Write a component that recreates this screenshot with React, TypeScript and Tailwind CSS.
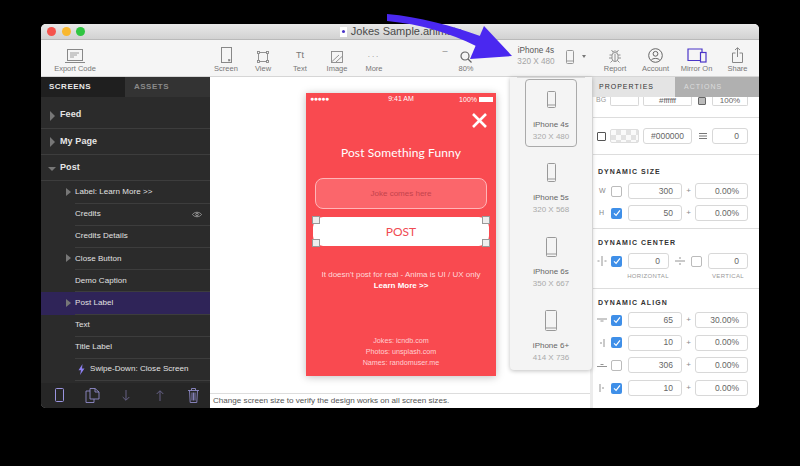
import React from "react";

const Tool = ({ w, label, children }: { w: string; label: string; children: React.ReactNode }) => (
  <div className={`${w} flex h-full shrink-0 flex-col items-center`}>
    <div className="flex h-[23px] items-end justify-center pt-[3px] text-[#777]">{children}</div>
    <div className="mt-[1px] whitespace-nowrap text-[7.5px] leading-[10px] text-[#777]">{label}</div>
  </div>
);

const Phone = ({ h = 17, w = 9, c = "#999" }: { h?: number; w?: number; c?: string }) => (
  <svg width={w + 2} height={h + 2} viewBox={`0 0 ${w + 2} ${h + 2}`} fill="none" stroke={c}>
    <rect x="1.5" y="1.5" width={w - 1} height={h - 1} rx="1" strokeWidth="1" />
    <path d={`M1.5 ${h - 2}H${w + 0.5}`} strokeWidth="1" />
  </svg>
);

const Row = ({ label, open }: { label: string; open?: boolean }) => (
  <div className="relative flex h-[26.3px] items-center border-b border-[#3d3d3d] pl-[19px] text-[9px] font-bold tracking-[0.1px] text-[#e6e6e6]">
    <span
      className={
        open
          ? "absolute left-[7px] top-[12px] h-0 w-0 border-x-[4px] border-t-[4px] border-x-transparent border-t-[#777]"
          : "absolute left-[9px] top-[8px] h-0 w-0 border-y-[5px] border-l-[5px] border-y-transparent border-l-[#777]"
      }
    />
    {label}
  </div>
);

const Sub = ({
  label,
  arrow,
  selected,
  eye,
  bolt,
}: {
  label: string;
  arrow?: boolean;
  selected?: boolean;
  eye?: boolean;
  bolt?: boolean;
}) => (
  <div className={`relative h-[22.2px] pl-[34px] ${selected ? "bg-[#2f2458]" : ""}`}>
    {arrow && (
      <span className="absolute left-[25px] top-[6.5px] h-0 w-0 border-y-[4.5px] border-l-[5px] border-y-transparent border-l-[#777]" />
    )}
    <div className="flex h-full items-center justify-between border-b border-[#3d3d3d] pr-[8px] text-[8px] tracking-[0.05px] text-[#e2e2e2]">
      <span className="flex items-center">
        {bolt && (
          <svg width="7" height="11" viewBox="0 0 7 11" className="ml-[3px] mr-[5px]">
            <path d="M4.5 0L0.5 6.2H3L2 11L6.5 4.4H4Z" fill="#8c7ff0" />
          </svg>
        )}
        {label}
      </span>
      {eye && (
        <svg width="10" height="7" viewBox="0 0 10 7" fill="none" stroke="#aaa" strokeWidth="0.8">
          <path d="M0.5 3.5C2.5 0.5 7.5 0.5 9.5 3.5C7.5 6.5 2.5 6.5 0.5 3.5Z" />
          <circle cx="5" cy="3.5" r="1.3" />
        </svg>
      )}
    </div>
  </div>
);

const Field = ({ w, v, center }: { w: string; v: string; center?: boolean }) => (
  <div
    className={`${w} flex h-[16px] shrink-0 items-center ${center ? "justify-center" : "justify-end pr-[8px]"} rounded-[3px] border border-[#d8d8d8] bg-white text-[8.5px] text-[#666]`}
  >
    {v}
  </div>
);

const Check = ({ on }: { on?: boolean }) =>
  on ? (
    <div className="flex h-[11px] w-[11px] shrink-0 items-center justify-center rounded-[2px] bg-[#3f8fe8]">
      <svg width="8" height="8" viewBox="0 0 8 8" fill="none" stroke="#fff" strokeWidth="1.2">
        <path d="M1 4.3L3.1 6.4L7 1.4" />
      </svg>
    </div>
  ) : (
    <div className="h-[11px] w-[11px] shrink-0 rounded-[2px] border border-[#bbb] bg-white" />
  );

const SectionTitle = ({ children }: { children: string }) => (
  <div className="text-[7px] font-bold leading-[9px] tracking-[1.05px] text-[#333]">{children}</div>
);

const AlignIcon = ({ d }: { d: string }) => (
  <svg width="10" height="10" viewBox="0 0 10 10" fill="none" stroke="#888" strokeWidth="0.9" className="shrink-0">
    <path d={d} />
  </svg>
);

const AlignRow = ({ d, on, a, b }: { d: string; on?: boolean; a: string; b: string }) => (
  <div className="flex h-[16px] items-center">
    <div className="-ml-[1px] flex w-[14px] justify-start">
      <AlignIcon d={d} />
    </div>
    <Check on={on} />
    <div className="w-[6px]" />
    <Field w="w-[54px]" v={a} />
    <div className="w-[13px] text-center text-[8px] text-[#888]">+</div>
    <Field w="w-[53px]" v={b} />
  </div>
);

const SizeRow = ({ l, on, a }: { l: string; on?: boolean; a: string }) => (
  <div className="flex h-[16px] items-center">
    <div className="w-[13px] pl-[1px] text-[7px] text-[#888]">{l}</div>
    <Check on={on} />
    <div className="w-[6px]" />
    <Field w="w-[54px]" v={a} />
    <div className="w-[13px] text-center text-[8px] text-[#888]">+</div>
    <Field w="w-[53px]" v="0.00%" />
  </div>
);

const Device = ({ h, w, name, size, selected }: { h: number; w: number; name: string; size: string; selected?: boolean }) => (
  <div className={`flex h-[68px] w-[52px] flex-col items-center rounded-[4px] ${selected ? "border border-[#aaa]" : ""}`}>
    <div className={`flex h-[38px] items-center justify-center ${selected ? "" : "pt-[1px]"}`}>
      <Phone h={h} w={w} />
    </div>
    <div className="mt-[1px] whitespace-nowrap text-[8px] leading-[12px] text-[#666]">{name}</div>
    <div className="whitespace-nowrap text-[8px] leading-[12px] text-[#aaa]">{size}</div>
  </div>
);

const Handle = ({ cls }: { cls: string }) => <div className={`absolute h-[8px] w-[8px] border border-[#999] bg-[#eee] ${cls}`} />;

export default function App() {
  return (
    <div className="relative h-[466px] w-[800px] overflow-hidden bg-black pl-[41px] pt-[24px] font-['Liberation_Sans']">
      {/* window */}
      <div className="flex h-[384px] w-[718px] flex-col overflow-hidden rounded-[5px] bg-white">
        {/* title bar */}
        <div className="relative flex h-[16px] shrink-0 items-center justify-center border-b border-[#b9b9b9] bg-gradient-to-b from-[#e8e8e8] to-[#d2d2d2]">
          <div className="absolute left-[6px] top-[3px] flex gap-[5.5px]">
            <span className="h-[9px] w-[9px] rounded-full bg-[#f5544d]" />
            <span className="h-[9px] w-[9px] rounded-full bg-[#f9b82f]" />
            <span className="h-[9px] w-[9px] rounded-full bg-[#2fc541]" />
          </div>
          <div className="ml-[2px] flex items-center gap-[4px] text-[11px] text-[#4a4a4a]">
            <span className="flex h-[10px] w-[7px] items-center justify-center bg-white">
              <span className="h-[3px] w-[3px] rounded-full bg-[#4a35c8]" />
            </span>
            Jokes Sample.animate
          </div>
        </div>
        {/* toolbar */}
        <div className="flex h-[37px] shrink-0 border-b border-[#d6d6d6] bg-[#f5f5f5]">
          <Tool w="w-[68px]" label="Export Code">
            <svg width="20" height="14" viewBox="0 0 20 14" fill="none" stroke="#888">
              <rect x="2.5" y="0.5" width="15" height="11" />
              <path d="M0 13.5H20" />
              <path d="M5 4H14M5 6H12M5 8H9" strokeWidth="0.8" />
            </svg>
          </Tool>
          <div className="w-[98.5px] shrink-0" />
          <Tool w="w-[37px]" label="Screen">
            <svg width="11" height="16" viewBox="0 0 11 16" fill="none" stroke="#888">
              <rect x="0.5" y="0.5" width="10" height="15" />
              <rect x="7.5" y="12.5" width="1.5" height="1.5" fill="#888" strokeWidth="0.5" />
            </svg>
          </Tool>
          <Tool w="w-[37px]" label="View">
            <svg width="12" height="12" viewBox="0 0 12 12" fill="none" stroke="#888" strokeWidth="0.9">
              <rect x="1.5" y="1.5" width="9" height="9" />
              <rect x="0.5" y="0.5" width="2" height="2" fill="#f5f5f5" />
              <rect x="9.5" y="0.5" width="2" height="2" fill="#f5f5f5" />
              <rect x="0.5" y="9.5" width="2" height="2" fill="#f5f5f5" />
              <rect x="9.5" y="9.5" width="2" height="2" fill="#f5f5f5" />
            </svg>
          </Tool>
          <Tool w="w-[37px]" label="Text">
            <span className="pb-[2px] text-[9px] leading-[12px] text-[#777]">Tt</span>
          </Tool>
          <Tool w="w-[37px]" label="Image">
            <svg width="12" height="12" viewBox="0 0 12 12" fill="none" stroke="#888" strokeWidth="0.9">
              <rect x="0.5" y="0.5" width="11" height="11" />
              <path d="M1 10.5L8 4M5 11L11 5.5" />
            </svg>
          </Tool>
          <Tool w="w-[37px]" label="More">
            <span className="pb-[5px] text-[8px] leading-[6px] tracking-[2px] text-[#888]">...</span>
          </Tool>
          <div className="w-[42.5px] shrink-0" />
          <div className="flex w-[20px] shrink-0 items-start justify-center pt-[6px] text-[9px] leading-[10px] text-[#888]">–</div>
          <Tool w="w-[22px]" label="80%">
            <svg width="12" height="12" viewBox="0 0 12 12" fill="none" stroke="#666" strokeWidth="1.2">
              <circle cx="5" cy="5" r="4" />
              <path d="M8 8L11.5 11.5" />
            </svg>
          </Tool>
          <div className="w-[39px] shrink-0" />
          <div className="flex w-[40px] shrink-0 flex-col items-center whitespace-nowrap pt-[4.5px] text-[8.2px] leading-[11.5px]">
            <span className="text-[#555]">iPhone 4s</span>
            <span className="text-[#a5a5a5]">320 X 480</span>
          </div>
          <div className="flex w-[19px] shrink-0 items-center justify-end pb-[3px]">
            <Phone h={14} w={8} />
          </div>
          <div className="flex w-[20px] shrink-0 items-center pb-[3px] pl-[7px]">
            <span className="h-0 w-0 border-x-[2.5px] border-t-[3px] border-x-transparent border-t-[#777]" />
          </div>
          <Tool w="w-[40px]" label="Report">
            <svg width="14" height="14" viewBox="0 0 14 14" fill="none" stroke="#888" strokeWidth="0.9">
              <rect x="4" y="3.5" width="6" height="9" rx="3" />
              <path d="M5 3.5C5 1.5 9 1.5 9 3.5M4 6H1.5M10 6H12.5M4 9H1M10 9H13M4.5 11.5L2.5 13.5M9.5 11.5L11.5 13.5M7 5V12.5M3.5 1L5 3M10.5 1L9 3" />
            </svg>
          </Tool>
          <Tool w="w-[41px]" label="Account">
            <svg width="15" height="15" viewBox="0 0 15 15" fill="none" stroke="#666" strokeWidth="1">
              <circle cx="7.5" cy="7.5" r="6.8" />
              <circle cx="7.5" cy="5.8" r="2.4" />
              <path d="M3.2 12.4C4 9.8 11 9.8 11.8 12.4" />
            </svg>
          </Tool>
          <Tool w="w-[41px]" label="Mirror On">
            <svg width="20" height="15" viewBox="0 0 20 15" fill="none" stroke="#4a35c8" strokeWidth="1.2">
              <path d="M13 12.5H1V1H15V4" />
              <rect x="13.5" y="4.5" width="5.5" height="9.5" fill="#f5f5f5" />
            </svg>
          </Tool>
          <Tool w="w-[41px]" label="Share">
            <svg width="11" height="16" viewBox="0 0 11 16" fill="none" stroke="#888">
              <path d="M3.5 6H0.5V15.5H10.5V6H7.5M5.5 10V1M3 3L5.5 0.7L8 3" />
            </svg>
          </Tool>
        </div>
        {/* body */}
        <div className="flex min-h-0 flex-1">
          {/* sidebar */}
          <div className="flex w-[169px] shrink-0 flex-col bg-[#2b2b2b]">
            <div className="flex h-[20px] shrink-0 text-[8px] font-bold tracking-[0.5px]">
              <div className="flex w-[84px] items-center bg-[#1f1f1f] pl-[8px] text-[#e8e8e8]">SCREENS</div>
              <div className="flex w-[85px] items-center bg-[#333] pl-[9px] text-[#8a8a8a]">ASSETS</div>
            </div>
            <div className="h-[5.5px] shrink-0" />
            <Row label="Feed" />
            <Row label="My Page" />
            <Row label="Post" open />
            <Sub label="Label: Learn More >>" arrow />
            <Sub label="Credits" eye />
            <Sub label="Credits Details" />
            <Sub label="Close Button" arrow />
            <Sub label="Demo Caption" />
            <Sub label="Post Label" arrow selected />
            <Sub label="Text" />
            <Sub label="Title Label" />
            <Sub label="Swipe-Down: Close Screen" bolt />
            <div className="mt-auto flex h-[25.5px] shrink-0 items-center bg-[#262626]">
              <div className="flex w-[34px] justify-center pl-[2px]">
                <svg width="9" height="14" viewBox="0 0 9 14" fill="none" stroke="#9a94e0" strokeWidth="1">
                  <rect x="0.5" y="0.5" width="8" height="13" rx="1" />
                </svg>
              </div>
              <div className="flex w-[34px] justify-center">
                <svg width="15" height="15" viewBox="0 0 15 15" fill="none" stroke="#8f8ac8" strokeWidth="0.9">
                  <path d="M5 3H1V14.5H9V11M5 0.5H10L14 4V11H5ZM10 0.5V4H14" />
                </svg>
              </div>
              <div className="flex w-[34px] justify-center">
                <svg width="8" height="11" viewBox="0 0 8 11" fill="none" stroke="#6d6890" strokeWidth="0.9">
                  <path d="M4 0V10M0.7 7L4 10.3L7.3 7" />
                </svg>
              </div>
              <div className="flex w-[34px] justify-center">
                <svg width="8" height="11" viewBox="0 0 8 11" fill="none" stroke="#6d6890" strokeWidth="0.9">
                  <path d="M4 11V1M0.7 4L4 0.7L7.3 4" />
                </svg>
              </div>
              <div className="flex w-[33px] justify-center">
                <svg width="11" height="15" viewBox="0 0 11 15" fill="none" stroke="#8f8ac8" strokeWidth="0.9">
                  <path d="M0 2.5H11M3.5 2.5V0.5H7.5V2.5M1.5 2.5L2.2 14.5H8.8L9.5 2.5M4 4.5V12.5M5.5 4.5V12.5M7 4.5V12.5" />
                </svg>
              </div>
            </div>
          </div>
          {/* canvas */}
          <div className="flex w-[380px] shrink-0 flex-col bg-white">
            <div className="flex-1 pl-[96px] pt-[16px]">
              <div className="flex h-[283px] w-[190px] flex-col items-center bg-[#f94a50] text-white shadow-[0_1px_8px_rgba(0,0,0,0.25)]">
                <div className="relative flex h-[13px] w-full shrink-0 items-center justify-center text-[7px]">
                  <span className="absolute left-[4px] top-[2px] text-[7px] leading-[8px] tracking-[-0.5px]">●●●●●</span>
                  9:41 AM
                  <span className="absolute right-[3px] top-[3px] flex items-center gap-[2px] leading-[7px]">
                    100%
                    <span className="h-[5px] w-[14px] bg-white" />
                  </span>
                </div>
                <div className="flex w-full justify-end pr-[9px] pt-[7px]">
                  <svg width="15" height="15" viewBox="0 0 15 15" stroke="#fff" strokeWidth="2.6">
                    <path d="M1 1L14 14M14 1L1 14" />
                  </svg>
                </div>
                <div className="mt-[16px] font-['Lato'] text-[12px] leading-[18px] tracking-[0.1px]">Post Something Funny</div>
                <div className="mt-[16px] flex h-[31px] w-[172px] items-center justify-center rounded-[8px] border border-[#ffb5b8] bg-[#fb666b] text-[8px] text-[#c4434b]">
                  Joke comes here
                </div>
                <div className="relative mt-[8px] flex h-[29px] w-[176px] items-center justify-center rounded-[10px] bg-white font-['Lato'] text-[12px] text-[#f04a52]">
                  POST
                  <Handle cls="-left-[1px] -top-[1px]" />
                  <Handle cls="-right-[1px] -top-[1px]" />
                  <Handle cls="-bottom-[1px] -left-[1px]" />
                  <Handle cls="-bottom-[1px] -right-[1px]" />
                </div>
                <div className="mt-[23px] text-center text-[8px] leading-[11px] text-[#ffd9da]">
                  It doesn't post for real - Anima is UI / UX only
                  <div className="font-bold text-white">Learn More &gt;&gt;</div>
                </div>
                <div className="mt-[44px] text-center text-[7.2px] leading-[11px] text-[#ffd0d2]">
                  <div>Jokes: icndb.com</div>
                  <div>Photos: unsplash.com</div>
                  <div>Names: randomuser.me</div>
                </div>
              </div>
            </div>
            <div className="flex h-[15px] shrink-0 items-center border-t border-[#ddd] pl-[3px] text-[8.1px] text-[#555]">
              Change screen size to verify the design works on all screen sizes.
            </div>
          </div>
          {/* right panel */}
          <div className="flex w-[169px] shrink-0 flex-col border-l-[3px] border-[#ececec] bg-white">
            <div className="-ml-[2px] flex h-[20px] shrink-0 text-[7px] tracking-[1px]">
              <div className="flex w-[84px] items-center bg-[#e4e4e4] pl-[8px] text-[#333]">PROPERTIES</div>
              <div className="flex flex-1 items-center bg-[#b0b0b0] pl-[9px] text-[#dcdcdc]">ACTIONS</div>
            </div>
            {/* BG row, cut by tabs */}
            <div className="flex h-[21px] shrink-0 items-start border-b border-[#ddd] pl-[3px]">
              <div className="w-[14px] text-[7px] leading-[6px] text-[#999]">BG</div>
              <div className="h-[9px] w-[29px] rounded-b-[2px] border border-t-0 border-[#d8d8d8]" />
              <div className="w-[4px]" />
              <div className="flex h-[9px] w-[49px] items-start justify-center rounded-b-[2px] border border-t-0 border-[#d8d8d8] text-[8px] leading-[7px] text-[#666]">
                #ffffff
              </div>
              <div className="w-[6px]" />
              <div className="h-[8px] w-[8px] rounded-[1px] border border-[#666] bg-[#bbb]" />
              <div className="w-[6px]" />
              <div className="flex h-[9px] w-[36px] items-start justify-center rounded-b-[2px] border border-t-0 border-[#d8d8d8] text-[8px] leading-[7px] text-[#666]">
                100%
              </div>
            </div>
            <div className="flex h-[37px] shrink-0 items-center border-b border-[#ddd] pl-[4px]">
              <div className="w-[13px]">
                <div className="h-[9px] w-[9px] rounded-[1px] border border-[#555]" />
              </div>
              <div
                className="h-[14px] w-[29px] rounded-[2px] border border-[#ddd]"
                style={{
                  backgroundImage: "repeating-conic-gradient(#e2e2e2 0% 25%, #fafafa 0% 50%)",
                  backgroundSize: "10px 10px",
                }}
              />
              <div className="w-[4px]" />
              <Field w="w-[49px]" v="#000000" center />
              <div className="w-[7px]" />
              <svg width="8" height="6" viewBox="0 0 8 6" stroke="#777" className="shrink-0">
                <path d="M0 0.5H8M0 3H8M0 5.5H8" />
              </svg>
              <div className="w-[5px]" />
              <Field w="w-[36px]" v="0" />
            </div>
            {/* dynamic size */}
            <div className="flex h-[74px] shrink-0 flex-col border-b border-[#ddd] pl-[5px] pt-[12px]">
              <SectionTitle>DYNAMIC SIZE</SectionTitle>
              <div className="mt-[7px] flex flex-col gap-[6px]">
                <SizeRow l="W" a="300" />
                <SizeRow l="H" on a="50" />
              </div>
            </div>
            {/* dynamic center */}
            <div className="flex h-[60px] shrink-0 flex-col border-b border-[#ddd] pl-[5px] pt-[9px]">
              <SectionTitle>DYNAMIC CENTER</SectionTitle>
              <div className="mt-[6px] flex h-[16px] items-center">
                <div className="-ml-[1px] w-[14px]">
                  <AlignIcon d="M5 0V10M2.5 5H0.5M7.5 5H9.5" />
                </div>
                <Check on />
                <div className="w-[6px]" />
                <Field w="w-[41px]" v="0" />
                <div className="flex w-[22px] justify-center">
                  <AlignIcon d="M0 5H10M5 1V3M5 7V9" />
                </div>
                <Check />
                <div className="w-[6px]" />
                <Field w="w-[40px]" v="0" />
              </div>
              <div className="mt-[3px] flex whitespace-nowrap text-[6px] leading-[9px] tracking-[0.35px] text-[#999]">
                <div className="ml-[29px] w-[42px] text-center">HORIZONTAL</div>
                <div className="ml-[39px] w-[40px] text-center">VERTICAL</div>
              </div>
            </div>
            {/* dynamic align */}
            <div className="flex flex-1 flex-col pl-[5px] pt-[9px]">
              <SectionTitle>DYNAMIC ALIGN</SectionTitle>
              <div className="mt-[5px] flex flex-col gap-[6.7px]">
                <AlignRow d="M0 4H10M3.5 6H6.5" on a="65" b="30.00%" />
                <AlignRow d="M7 1V9M3 5H5" on a="10" b="0.00%" />
                <AlignRow d="M0 6.5H10M3.5 4.5H6.5" a="306" b="0.00%" />
                <AlignRow d="M3 1V9M5 5H7" on a="10" b="0.00%" />
              </div>
            </div>
          </div>
        </div>
      </div>
      {/* device dropdown */}
      <div className="absolute left-[510px] top-[77px] flex h-[293px] w-[82px] flex-col items-center rounded-b-[4px] bg-[#f4f4f4] pt-[2px] shadow-[0_1px_4px_rgba(0,0,0,0.25)]">
        <div className="absolute left-[7px] right-[7px] top-0 h-px bg-[#d8d8d8]" />
        <div className="flex flex-col gap-[6px]">
          <Device h={17} w={9} name="iPhone 4s" size="320 X 480" selected />
          <Device h={19} w={9} name="iPhone 5s" size="320 X 568" />
          <Device h={20} w={11} name="iPhone 6s" size="350 X 667" />
          <Device h={21} w={12} name="iPhone 6+" size="414 X 736" />
        </div>
      </div>
      {/* annotation arrow */}
      <svg className="absolute left-[380px] top-[10px]" width="140" height="55" viewBox="380 10 140 55">
        <path d="M387 14C420 17 450 25 483 37L476 46C450 33 420 24 387 21Z" fill="#4a28f0" />
        <path d="M484 26L512 56L470 59Z" fill="#4a28f0" />
      </svg>
    </div>
  );
}
